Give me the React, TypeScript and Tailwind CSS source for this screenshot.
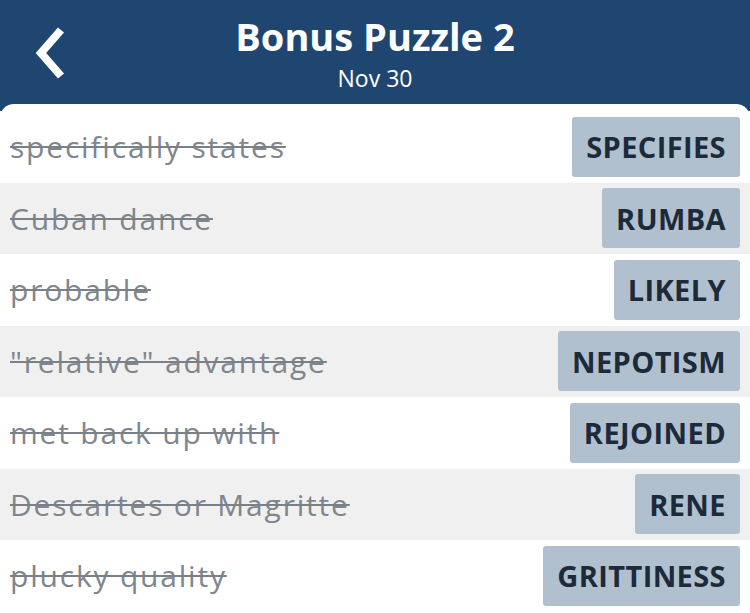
import React from 'react'

interface Clue {
  clue: string
  answer: string
}

const clues: Clue[] = [
  { clue: 'specifically states', answer: 'SPECIFIES' },
  { clue: 'Cuban dance', answer: 'RUMBA' },
  { clue: 'probable', answer: 'LIKELY' },
  { clue: '"relative" advantage', answer: 'NEPOTISM' },
  { clue: 'met back up with', answer: 'REJOINED' },
  { clue: 'Descartes or Magritte', answer: 'RENE' },
  { clue: 'plucky quality', answer: 'GRITTINESS' },
]

const BackIcon = () => (
  <svg width="40" height="56" viewBox="0 0 40 56" className="block">
    <polyline
      points="29,4 9,27 29,50"
      fill="none"
      stroke="white"
      strokeWidth="8"
      strokeLinejoin="miter"
    />
  </svg>
)

const App = () => {
  return (
    <div className="w-[750px] h-[613px] overflow-hidden bg-[#1f4671] font-['Open_Sans','Lato',sans-serif]">
      <header className="relative h-[104px] flex flex-col items-center text-white">
        <div className="absolute left-[32px] top-[26px]">
          <BackIcon />
        </div>
        <h1 className="mt-[11px] text-[38px] leading-[50px] font-bold">Bonus Puzzle 2</h1>
        <div className="text-[23px] leading-[30px] mt-[2px]">Nov 30</div>
      </header>
      <ul className="bg-white rounded-t-[14px] pt-[7px] h-[509px]">
        {clues.map((c, i) => (
          <li
            key={c.answer}
            className={`h-[71.5px] flex items-center justify-between pl-[10px] pr-[10px] ${
              i % 2 === 1 ? 'bg-[#f0f0f0]' : 'bg-white'
            }`}
          >
            <span className="text-[30px] tracking-[1.8px] text-[#80868d] line-through decoration-[1.5px] decoration-[#7a8087]">
              {c.clue}
            </span>
            <span className="h-[60px] flex items-center px-[14px] rounded-[3px] bg-[#b0c0ce] text-[29px] font-bold tracking-[0.4px] text-[#1c2a3a]">
              {c.answer}
            </span>
          </li>
        ))}
      </ul>
    </div>
  )
}

export default App
